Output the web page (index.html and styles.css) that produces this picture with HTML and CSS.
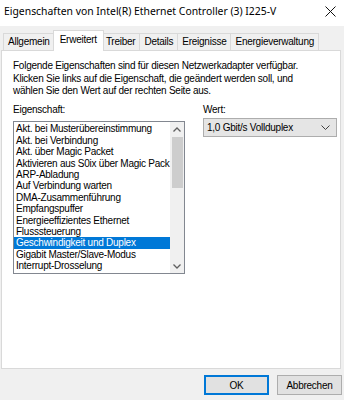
FILE: index.html
```html
<!DOCTYPE html>
<html lang="de">
<head>
    <meta charset="UTF-8">
    <meta name="viewport" content="width=device-width, initial-scale=1.0">
    <title>Eigenschaften von Intel(R) Ethernet Controller (3) I225-V</title>
    <link rel="stylesheet" href="styles.css">
</head>
<body>
    <div class="window">
        <div class="titlebar">
            <span class="title">Eigenschaften von Intel(R) Ethernet Controller (3) I225-V</span>
            <svg class="close" width="11" height="11" viewBox="0 0 11 11">
                <path d="M0.5 0.5 L10.5 10.5 M10.5 0.5 L0.5 10.5" stroke="#111" stroke-width="1" fill="none"/>
            </svg>
        </div>

        <div class="tabs">
            <div class="tab">Allgemein</div>
            <div class="tab active">Erweitert</div>
            <div class="tab">Treiber</div>
            <div class="tab">Details</div>
            <div class="tab">Ereignisse</div>
            <div class="tab">Energieverwaltung</div>
        </div>

        <div class="panel">
            <p class="intro">
                Folgende Eigenschaften sind für diesen Netzwerkadapter verfügbar.<br>
                Klicken Sie links auf die Eigenschaft, die geändert werden soll, und<br>
                wählen Sie den Wert auf der rechten Seite aus.
            </p>

            <div class="columns">
                <div class="col">
                    <div class="label">Eigenschaft:</div>
                    <div class="listbox">
                        <ul class="items">
                            <li>Akt. bei Musterübereinstimmung</li>
                            <li>Akt. bei Verbindung</li>
                            <li>Akt. über Magic Packet</li>
                            <li>Aktivieren aus S0ix über Magic Pack</li>
                            <li>ARP-Abladung</li>
                            <li>Auf Verbindung warten</li>
                            <li>DMA-Zusammenführung</li>
                            <li>Empfangspuffer</li>
                            <li>Energieeffizientes Ethernet</li>
                            <li>Flusssteuerung</li>
                            <li class="selected">Geschwindigkeit und Duplex</li>
                            <li>Gigabit Master/Slave-Modus</li>
                            <li>Interrupt-Drosselung</li>
                        </ul>
                        <div class="scrollbar">
                            <div class="arrow">
                                <svg width="8" height="5" viewBox="0 0 8 5"><path d="M0.5 4.5 L4 1 L7.5 4.5" stroke="#606060" stroke-width="1.3" fill="none"/></svg>
                            </div>
                            <div class="track"><div class="thumb"></div></div>
                            <div class="arrow">
                                <svg width="8" height="5" viewBox="0 0 8 5"><path d="M0.5 0.5 L4 4 L7.5 0.5" stroke="#606060" stroke-width="1.3" fill="none"/></svg>
                            </div>
                        </div>
                    </div>
                </div>

                <div class="col">
                    <div class="label value-label">Wert:</div>
                    <div class="select">
                        <span>1,0 Gbit/s Vollduplex</span>
                        <svg width="9" height="5" viewBox="0 0 9 5"><path d="M0.5 0.5 L4.5 4.5 L8.5 0.5" stroke="#404040" stroke-width="1" fill="none"/></svg>
                    </div>
                </div>
            </div>
        </div>

        <div class="buttons">
            <button class="btn default">OK</button>
            <button class="btn">Abbrechen</button>
        </div>
    </div>
</body>
</html>
```

FILE: styles.css
```css
body {
    margin: 0;
    padding: 0;
    background-color: #f0f0f0;
    font-family: "Liberation Sans", Arial, sans-serif;
    font-size: 10px;
    letter-spacing: -0.25px;
    color: #000;
}

.window {
    width: 344px;
    height: 400px;
    overflow: hidden;
}

/* Titelleiste */
.titlebar {
    height: 26px;
    background-color: #fff;
    display: flex;
    align-items: flex-start;
    justify-content: space-between;
    padding: 0 8px 0 4px;
}

.title {
    font-family: "Noto Sans", "Open Sans", sans-serif;
    font-size: 10.4px;
    letter-spacing: 0;
    line-height: 22px;
}

.close {
    margin-top: 6px;
}

/* Reiter */
.tabs {
    display: flex;
    align-items: flex-end;
    height: 20px;
    margin-top: 4px;
    padding-left: 3px;
}

.tab {
    height: 17px;
    line-height: 16px;
    padding: 0 4px;
    border: 1px solid #d9d9d9;
    border-bottom: none;
    border-left: none;
    background-color: #f0f0f0;
    box-sizing: border-box;
}

.tab:first-child {
    border-left: 1px solid #d9d9d9;
}

.tab.active {
    height: 21px;
    line-height: 17px;
    margin-bottom: -1px;
    margin-left: -2px;
    margin-right: -2px;
    padding: 0 6px;
    border-left: 1px solid #d9d9d9;
    background-color: #fff;
    position: relative;
    z-index: 1;
}

.tab.active + .tab {
    border-left: none;
}

/* Inhalt */
.panel {
    width: 340px;
    height: 319px;
    margin-left: 1px;
    box-sizing: border-box;
    border: 1px solid #d9d9d9;
    background-color: #fff;
    padding: 9px 3px 0 11px;
}

.intro {
    margin: 0 0 6px 0;
    line-height: 12.6px;
}

.columns {
    display: grid;
    grid-template-columns: 172px 134px;
    column-gap: 18px;
}

.label {
    line-height: 12.6px;
    margin-bottom: 5px;
}

.value-label {
    margin-bottom: 1.5px;
}

.listbox {
    height: 153px;
    box-sizing: border-box;
    border: 1px solid #828790;
    display: flex;
}

.items {
    flex: 1;
    min-width: 0;
    margin: 0;
    padding: 1px 0 0 0;
    list-style: none;
    overflow: hidden;
}

.items li {
    height: 11.4px;
    line-height: 11.4px;
    padding-left: 2px;
    white-space: nowrap;
}

.items li.selected {
    background-color: #0078d7;
    color: #fff;
}

.scrollbar {
    width: 14px;
    flex-shrink: 0;
    background-color: #f0f0f0;
    display: flex;
    flex-direction: column;
}

.arrow {
    height: 14px;
    display: flex;
    align-items: center;
    justify-content: center;
}

.track {
    flex: 1;
    padding: 1px 1px 0 2px;
}

.thumb {
    height: 51px;
    background-color: #cdcdcd;
}

.select {
    height: 19px;
    box-sizing: border-box;
    border: 1px solid #adadad;
    background-color: #e5e5e5;
    display: flex;
    align-items: center;
    justify-content: space-between;
    padding: 0 6px 0 3px;
}

/* Schaltflächen */
.buttons {
    display: flex;
    justify-content: flex-end;
    gap: 8px;
    margin-top: 6px;
    padding-right: 2px;
}

.btn {
    width: 65px;
    height: 20px;
    padding: 0;
    font-family: inherit;
    font-size: 10px;
    letter-spacing: -0.25px;
    color: #000;
    background-color: #e1e1e1;
    border: 1px solid #adadad;
}

.btn.default {
    border-color: #0078d7;
    box-shadow: inset 0 0 0 1px #0078d7;
}
```
